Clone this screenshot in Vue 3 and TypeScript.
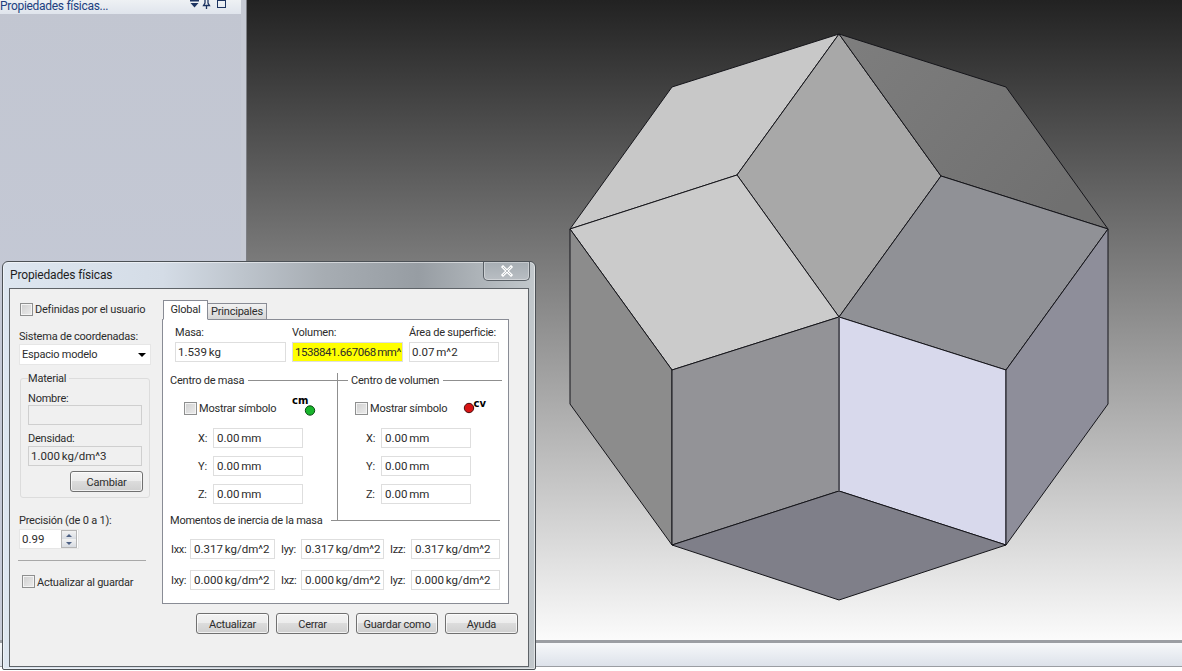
<template>
  <div class="app">
    <div class="workspace">
      <aside class="browser">
        <div class="browser-head">
          <span class="browser-title">Propiedades físicas...</span>
          <svg class="browser-icons" width="44" height="14" viewBox="0 0 44 14">
            <path d="M1 0h9v1.5H1zM1.5 3h8l-4 4.5z" fill="#1c3360" />
            <path d="M16 0v3l-1.5 2.5h6L19 3V0M17.5 5.500V9" fill="none" stroke="#1c3360" stroke-width="1.300" />
            <rect x="28.500" y="0.500" width="8" height="7" fill="none" stroke="#1c3360" />
          </svg>
        </div>
      </aside>
      <main class="viewport">
        <svg class="model" width="935" height="640" viewBox="247 0 935 640">
          <defs>
            <linearGradient id="faceTr" x1="0" y1="0" x2="1" y2="0.6">
              <stop offset="0" stop-color="#7e7e7e" />
              <stop offset="1" stop-color="#707070" />
            </linearGradient>
          </defs>
          <polygon
            v-for="face in faces"
            :key="face.points"
            :points="face.points"
            :fill="face.fill"
            stroke="#15151a"
            stroke-width="1"
            stroke-linejoin="round"
          />
          <line x1="839" y1="317" x2="839" y2="491" stroke="#54545c" stroke-width="2" />
        </svg>
      </main>
    </div>
    <footer class="statusbar"></footer>

    <section class="dialog">
      <header class="dialog-title">
        <span>Propiedades físicas</span>
        <button class="close" type="button">
          <svg width="14" height="12" viewBox="0 0 14 12">
            <path d="M3 2l8 8M11 2l-8 8" stroke="#fff" stroke-width="3" stroke-linecap="square" fill="none" />
            <path d="M3 2l8 8M11 2l-8 8" stroke="#8f979e" stroke-width="0.600" fill="none" />
          </svg>
        </button>
      </header>

      <div class="client">
        <div class="side">
          <label class="check-row user">
            <span class="check"></span>
            <span>Definidas por el usuario</span>
          </label>
          <div class="side-label">Sistema de coordenadas:</div>
          <div class="combo">
            <span>Espacio modelo</span>
            <i class="combo-arrow"></i>
          </div>

          <div class="group">
            <div class="legend">Material</div>
            <div class="group-label first">Nombre:</div>
            <div class="field disabled group-field"></div>
            <div class="group-label">Densidad:</div>
            <div class="field disabled group-field density">1.000 kg/dm^3</div>
            <button class="btn change" type="button">Cambiar</button>
          </div>

          <div class="side-label precision">Precisión (de 0 a 1):</div>
          <div class="spin">
            <span>0.99</span>
            <div class="spin-btns">
              <i class="spin-btn"><b class="up"></b></i>
              <i class="spin-btn"><b class="down"></b></i>
            </div>
          </div>
          <div class="separator"></div>
          <label class="check-row save">
            <span class="check"></span>
            <span class="save-label">Actualizar al guardar</span>
          </label>
        </div>

        <div class="content">
          <div class="tabs">
            <div class="tab active">Global</div>
            <div class="tab">Principales</div>
          </div>

          <div class="panel">
            <div class="totals">
              <div v-for="total in totals" :key="total.label" class="total" :style="{ width: total.width + 'px' }">
                <div class="total-label">{{ total.label }}</div>
                <div :class="['field', { highlight: total.highlight }]">{{ total.value }}</div>
              </div>
            </div>

            <div class="centers">
              <div class="center center-mass">
                <div class="heading">
                  <span>Centro de masa</span>
                  <i class="rule"></i>
                </div>
                <div class="symbol-row">
                  <label class="check-row">
                    <span class="check"></span>
                    <span>Mostrar símbolo</span>
                  </label>
                  <svg class="symbol symbol-cm" width="28" height="26" viewBox="0 0 28 26">
                    <text x="2" y="10" class="symbol-text">cm</text>
                    <circle cx="20" cy="16.500" r="4.700" fill="#18b52c" stroke="#0c4a14" />
                  </svg>
                </div>
                <div v-for="axis in axes" :key="axis" class="coord">
                  <span class="coord-label">{{ axis }}:</span>
                  <div class="field coord-field">0.00 mm</div>
                </div>
              </div>

              <div class="center center-volume">
                <div class="heading">
                  <i class="rule lead"></i>
                  <span>Centro de volumen</span>
                  <i class="rule"></i>
                </div>
                <div class="symbol-row">
                  <label class="check-row">
                    <span class="check"></span>
                    <span>Mostrar símbolo</span>
                  </label>
                  <svg class="symbol symbol-cv" width="28" height="26" viewBox="0 0 28 26">
                    <circle cx="6" cy="14" r="4.700" fill="#d81414" stroke="#4a0c0c" />
                    <text x="10.500" y="13" class="symbol-text">cv</text>
                  </svg>
                </div>
                <div v-for="axis in axes" :key="axis" class="coord">
                  <span class="coord-label">{{ axis }}:</span>
                  <div class="field coord-field">0.00 mm</div>
                </div>
              </div>
            </div>

            <div class="heading moments">
              <span>Momentos de inercia de la masa</span>
              <i class="rule"></i>
            </div>
            <div class="inertia">
              <template v-for="item in inertia" :key="item.label">
                <span class="inertia-label">{{ item.label }}:</span>
                <div class="field">{{ item.value }}</div>
              </template>
            </div>
          </div>

          <div class="actions">
            <button v-for="action in actions" :key="action" class="btn" type="button">{{ action }}</button>
          </div>
        </div>
      </div>
    </section>
  </div>
</template>

<script setup lang="ts">
interface Face {
  points: string
  fill: string
}

interface Total {
  label: string
  value: string
  width: number
  highlight?: boolean
}

const faces: Face[] = [
  { points: '839,34 672,87 570,229 737,175', fill: '#c8c8c8' },
  { points: '839,34 737,175 839,317 941,176', fill: '#a8a8a8' },
  { points: '839,34 1006,87 1108,229 941,176', fill: 'url(#faceTr)' },
  { points: '570,229 737,175 839,317 672,370', fill: '#cbcbcb' },
  { points: '941,176 1108,229 1006,370 839,317', fill: '#909196' },
  { points: '570,229 672,370 672,545 570,404', fill: '#8c8c8c' },
  { points: '672,370 839,317 839,491 672,545', fill: '#939397' },
  { points: '839,317 1006,370 1006,545 839,491', fill: '#d8d9ec' },
  { points: '1108,229 1108,404 1006,545 1006,370', fill: '#8e8e9a' },
  { points: '672,545 839,491 1006,545 839,600', fill: '#7f7f89' }
]

const totals: Total[] = [
  { label: 'Masa:', value: '1.539 kg', width: 111 },
  { label: 'Volumen:', value: '1538841.667068 mm^', width: 111, highlight: true },
  { label: 'Área de superficie:', value: '0.07 m^2', width: 90 }
]

const axes = ['X', 'Y', 'Z']

const inertia = [
  { label: 'Ixx', value: '0.317 kg/dm^2' },
  { label: 'Iyy', value: '0.317 kg/dm^2' },
  { label: 'Izz', value: '0.317 kg/dm^2' },
  { label: 'Ixy', value: '0.000 kg/dm^2' },
  { label: 'Ixz', value: '0.000 kg/dm^2' },
  { label: 'Iyz', value: '0.000 kg/dm^2' }
]

const actions = ['Actualizar', 'Cerrar', 'Guardar como', 'Ayuda']
</script>

<style>
html,
body {
  margin: 0;
  overflow: hidden;
  background: #fff;
}
</style>

<style scoped>
.app {
  position: relative;
  width: 1182px;
  height: 671px;
  display: flex;
  flex-direction: column;
  overflow: hidden;
  font-family: Roboto, "Noto Sans", sans-serif;
  font-size: 11px;
  letter-spacing: -0.22px;
  color: #2c2c2c;
}

.workspace {
  display: flex;
  height: 640px;
}

.browser {
  width: 241px;
  flex-shrink: 0;
  background: linear-gradient(#c2c6d1, #c6cbd9);
  border-right: 5px solid #c6cad4;
  box-shadow: 1px 0 0 #7d7f84;
  margin-right: 1px;
}

.browser-head {
  height: 14px;
  display: flex;
  align-items: flex-end;
  justify-content: space-between;
  overflow: hidden;
  background: linear-gradient(#eef1f4, #dfe4ec);
}

.browser-title {
  line-height: 16px;
  font-size: 12px;
  letter-spacing: -0.3px;
  color: #20407f;
  white-space: nowrap;
}

.browser-icons {
  flex-shrink: 0;
  margin-right: 8px;
}

.viewport {
  position: relative;
  flex: 1;
  background: linear-gradient(#222222, #fbfbfb);
}

.model {
  position: absolute;
  left: 0;
  top: 0;
}

.statusbar {
  flex: 1;
  border-top: 3px solid #9b9ea3;
  background: linear-gradient(#f6f8fa 0, #dde2ea 23px, #9a9da2 23px, #9a9da2 24px, #fff 24px);
}

.dialog {
  position: absolute;
  left: 2px;
  top: 261px;
  width: 534px;
  height: 409px;
  box-sizing: border-box;
  display: flex;
  flex-direction: column;
  border: 1px solid #4c5156;
  border-radius: 6px 6px 2px 2px;
  padding: 0 6px 2px;
  background: linear-gradient(90deg, #dde6f0 0, #d4dce6 30%, #a7adb3 60%, #979da3 78%, #c2c8cc 100%);
  box-shadow: inset 0 0 0 1px rgba(255, 255, 255, 0.5);
}

.dialog-title {
  position: relative;
  height: 26px;
  flex-shrink: 0;
  display: flex;
  align-items: center;
  padding-left: 1px;
  font-size: 12px;
  letter-spacing: -0.15px;
  color: #1e1e1e;
}

.close {
  position: absolute;
  right: -1px;
  top: 0;
  width: 47px;
  height: 19px;
  padding: 0;
  display: flex;
  align-items: center;
  justify-content: center;
  border: 1px solid #5a6066;
  border-top: 0;
  border-radius: 0 0 5px 5px;
  background: linear-gradient(#a6adb3, #b9bec3);
  box-shadow: inset 0 0 0 1px rgba(255, 255, 255, 0.35);
}

.client {
  flex: 1;
  display: flex;
  padding: 11px 0 0 9px;
  border: 1px solid #5e6368;
  background: #f0f0f0;
}

.side {
  width: 133px;
  margin-right: 10px;
  flex-shrink: 0;
  padding-top: 3px;
  display: flex;
  flex-direction: column;
  align-items: flex-start;
}

.check-row {
  display: flex;
  align-items: center;
  gap: 2px;
  height: 13px;
  white-space: nowrap;
}

.check-row.user {
  margin-left: 1px;
}

.check {
  width: 13px;
  height: 13px;
  box-sizing: border-box;
  flex-shrink: 0;
  border: 1px solid #8e8f8f;
  background: linear-gradient(135deg, #cfcfcf, #ececec);
  box-shadow: inset 0 0 0 1px #f4f4f4;
}

.side-label {
  margin-top: 13px;
  padding-top: 2px;
  line-height: 12px;
}

.combo {
  width: 132px;
  height: 21px;
  margin-top: 1px;
  box-sizing: border-box;
  display: flex;
  align-items: center;
  justify-content: space-between;
  padding: 0 4px 0 2px;
  background: #fff;
  border: 1px solid #e6e6e6;
}

.combo-arrow {
  width: 0;
  height: 0;
  border: 4px solid transparent;
  border-top: 4px solid #000;
  border-bottom: 0;
}

.group {
  width: 130px;
  height: 120px;
  margin: 13px 0 0 1px;
  box-sizing: border-box;
  display: flex;
  flex-direction: column;
  align-items: flex-start;
  padding: 0 7px;
  border: 1px solid #dcdcdc;
  border-radius: 3px;
}

.legend {
  margin-top: -8px;
  padding: 2px 3px 0 0;
  line-height: 12px;
  background: #f0f0f0;
}

.group-label {
  margin-top: 6px;
  padding-top: 2px;
  line-height: 12px;
}

.group-field {
  width: 114px;
}

.density {
  margin-top: 1px;
}

.field {
  height: 20px;
  box-sizing: border-box;
  padding: 0 2px;
  font-size: 11.5px;
  letter-spacing: 0;
  word-spacing: -1px;
  line-height: 18px;
  white-space: nowrap;
  overflow: hidden;
  background: #fff;
  border: 1px solid #dedede;
}

.field.disabled {
  background: #f0f0f0;
  border-color: #cfcfcf;
}

.field.highlight {
  background: #ffff00;
  letter-spacing: -0.45px;
}

.btn {
  width: 73px;
  height: 21px;
  padding: 1px 0 0;
  font: inherit;
  letter-spacing: inherit;
  color: inherit;
  border: 1px solid #707070;
  border-radius: 3px;
  background: linear-gradient(#f3f3f3 0, #ececec 48%, #dcdcdc 50%, #cfcfcf 100%);
  box-shadow: inset 0 0 0 1px rgba(255, 255, 255, 0.7);
}

.change {
  align-self: flex-end;
  margin: 5px -1px 0 0;
}

.precision {
  margin-top: 15px;
}

.spin {
  width: 60px;
  height: 20px;
  margin-top: 2px;
  box-sizing: border-box;
  display: flex;
  align-items: center;
  justify-content: space-between;
  padding-left: 2px;
  font-size: 11.5px;
  letter-spacing: 0;
  background: #fff;
  border: 1px solid #e6e6e6;
}

.spin-btns {
  width: 16px;
  height: 18px;
  margin-right: 1px;
  display: flex;
  flex-direction: column;
  border: 1px solid #b5b5b5;
  box-sizing: border-box;
}

.spin-btn {
  flex: 1;
  display: flex;
  align-items: center;
  justify-content: center;
  background: linear-gradient(#f2f2f2, #d8dce2);
}

.up,
.down {
  width: 0;
  height: 0;
  border: 3px solid transparent;
}

.up {
  border-top: 0;
  border-bottom: 3px solid #4d6185;
}

.down {
  border-bottom: 0;
  border-top: 3px solid #4d6185;
}

.separator {
  width: 128px;
  height: 1px;
  margin: 11px 0 0 -1px;
  background: #a8a8a8;
}

.save {
  margin: 14px 0 0 3px;
}

.save-label {
  padding-top: 2px;
}

.content {
  width: 347px;
  flex-shrink: 0;
}

.tabs {
  position: relative;
  z-index: 1;
  display: flex;
  align-items: flex-end;
  height: 20px;
  padding-left: 1px;
  margin-bottom: -1px;
}

.tab {
  height: 17px;
  width: 59px;
  box-sizing: border-box;
  text-align: center;
  line-height: 15px;
  border: 1px solid #898c95;
  border-left: 0;
  background: linear-gradient(#f2f2f2, #d6d6d6);
}

.tab.active {
  width: 45px;
  height: 20px;
  line-height: 17px;
  background: #fff;
  border-left: 1px solid #898c95;
  border-bottom: 1px solid #fff;
}

.panel {
  height: 285px;
  box-sizing: border-box;
  padding: 5px 6px 0 7px;
  background: #fff;
  border: 1px solid #898c95;
}

.totals {
  display: flex;
  gap: 6px;
  margin-left: 5px;
}

.total-label {
  padding-top: 2px;
  line-height: 12px;
  margin-bottom: 3px;
  white-space: nowrap;
}

.centers {
  display: flex;
  margin-top: 11px;
  height: 148px;
}

.center-mass {
  width: 167px;
  flex-shrink: 0;
}

.center-volume {
  flex: 1;
  border-left: 1px solid #8f8f8f;
}

.heading {
  display: flex;
  align-items: center;
  height: 14px;
  white-space: nowrap;
}

.rule {
  flex: 1;
  height: 1px;
  margin-left: 4px;
  background: #8f8f8f;
}

.rule.lead {
  flex: none;
  width: 10px;
  margin: 0 3px 0 0;
}

.symbol-row {
  position: relative;
  display: flex;
  margin: 15px 0 13px 14px;
}

.center-volume .symbol-row {
  margin-left: 17px;
}

.symbol {
  position: absolute;
  top: -8px;
}

.symbol-cm {
  left: 106px;
}

.symbol-cv {
  left: 108px;
}

.symbol-text {
  font-family: "DejaVu Sans", sans-serif;
  font-size: 10px;
  font-weight: 700;
  letter-spacing: 0;
  fill: #000;
}

.coord {
  display: flex;
  align-items: center;
  margin: 0 0 8px 28px;
}

.coord-label {
  width: 10px;
  margin-right: 5px;
  flex-shrink: 0;
}

.coord-field,
.inertia .field {
  padding-left: 3px;
}

.coord-field {
  width: 90px;
}

.moments {
  margin: -8px 2px 0 0;
}

.moments .rule {
  flex: none;
  width: 169px;
  margin-left: auto;
}

.inertia {
  display: grid;
  grid-template-columns: 19px 85px 26px 83px 27px 89px;
  row-gap: 11px;
  align-items: center;
  margin: 12px 0 0 1px;
}

.inertia-label {
  letter-spacing: -0.3px;
  white-space: nowrap;
}

.inertia-label:nth-child(6n + 3),
.inertia-label:nth-child(6n + 5) {
  padding-left: 6px;
}

.actions {
  display: flex;
  justify-content: flex-end;
  gap: 7px;
  margin: 9px -9px 0 0;
}

.actions .btn:nth-child(3) {
  width: 82px;
}
</style>
